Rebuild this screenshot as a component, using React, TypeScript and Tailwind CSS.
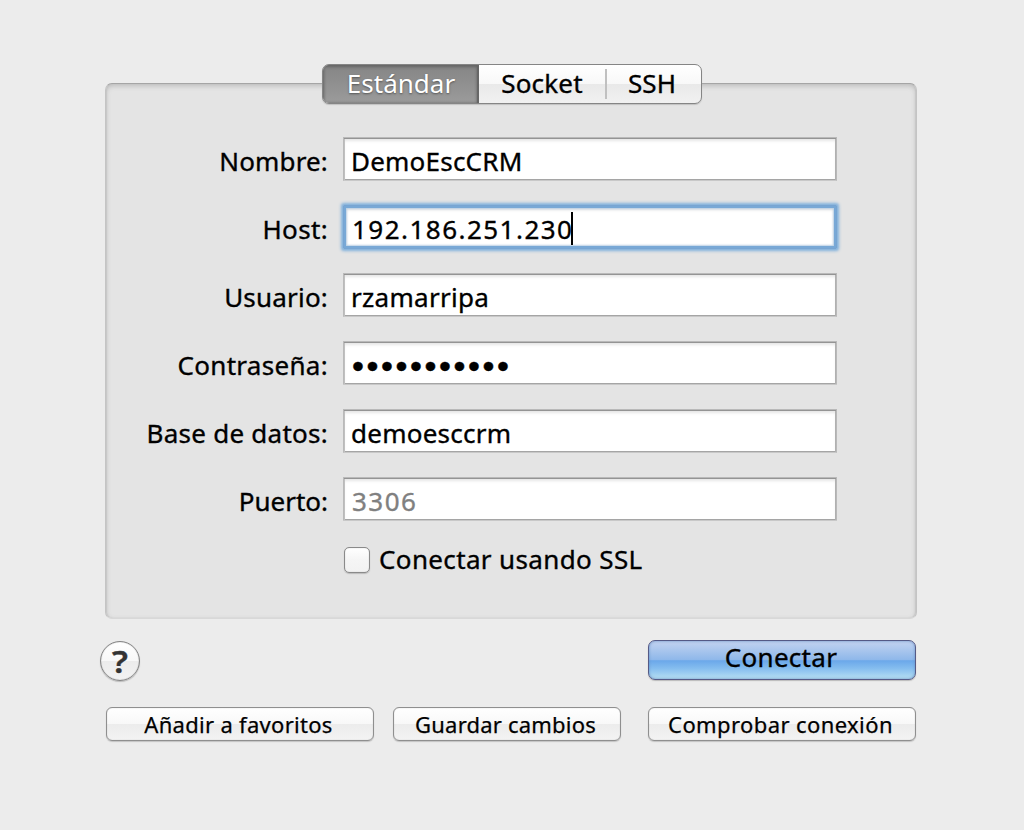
import React from "react";

type Field = {
  label: string;
  value: string;
  spacing: string;
  labelSpacing: string;
  kind?: "focused" | "password" | "placeholder";
};

const fields: Field[] = [
  { label: "Nombre:", value: "DemoEscCRM", spacing: "tracking-[0.22px]", labelSpacing: "tracking-[0.15px]" },
  { label: "Host:", value: "192.186.251.230", spacing: "tracking-[1.47px]", labelSpacing: "tracking-[0.35px]", kind: "focused" },
  { label: "Usuario:", value: "rzamarripa", spacing: "tracking-[0.3px]", labelSpacing: "tracking-[0.2px]" },
  { label: "Contraseña:", value: "•••••••••••", spacing: "tracking-[2.6px]", labelSpacing: "tracking-[0.3px]", kind: "password" },
  { label: "Base de datos:", value: "demoesccrm", spacing: "tracking-[0.25px]", labelSpacing: "tracking-[0.25px]" },
  { label: "Puerto:", value: "3306", spacing: "tracking-[1.5px]", labelSpacing: "tracking-[0px]", kind: "placeholder" },
];

function FieldRow({ label, value, spacing, labelSpacing, kind }: Field) {
  const box =
    kind === "focused"
      ? "border-[#78a5d2] shadow-[0_0_3px_2px_#7fb0dc,inset_0_0_0_2px_#78a8d6,inset_0_0_2px_3px_#b9cfe4,inset_0_2px_3px_2px_#e2e2e2]"
      : "border-[#b9b9b9] border-b-[#c8c8c8] shadow-[inset_0_1px_0_#949494,inset_1px_0_0_#c0c0c0,inset_-1px_0_0_#b0b0b0,inset_0_-1px_0_#a5a5a5,inset_0_3px_3px_#e6e6e6]";
  return (
    <div className="flex h-11 items-center">
      <div className={`w-[223px] pt-[3px] text-right leading-8 ${labelSpacing}`}>{label}</div>
      <div
        className={`ml-[15px] flex h-11 w-[494px] items-center border bg-white pt-[3px] ${kind ? "rounded-[1px] pl-[8px]" : "pl-[7px]"} ${box}`}
      >
        <span
          className={`whitespace-nowrap leading-8 ${spacing} ${kind === "placeholder" ? "text-[#808080]" : ""} ${kind === "password" ? "pt-[3px] font-['Liberation_Sans',sans-serif] text-[34px]" : ""}`}
        >
          {value}
        </span>
        {kind === "focused" && <span className="-ml-[2px] h-[33px] w-[2px] bg-black" />}
      </div>
    </div>
  );
}

function SmallButton({ width, tracking, children }: { width: string; tracking: string; children: string }) {
  return (
    <button
      className={`flex h-[34px] items-center justify-center rounded-md border border-[#8f8f8f] bg-[linear-gradient(#fff,#f8f8f8_49%,#ececec_51%,#f3f3f3)] pr-[3px] text-[22px] shadow-[0_1px_1px_#c4c4c4,inset_0_0_1px_#b0b0b0] [-webkit-text-stroke:0.25px] ${width} ${tracking}`}
    >
      {children}
    </button>
  );
}

export default function App() {
  return (
    <main className="h-[830px] w-[1024px] overflow-hidden bg-[#ececec] pt-16 font-['Noto_Sans',sans-serif] text-[26px] text-black [-webkit-text-stroke:0.35px]">
      <div className="relative z-10 ml-[322px] flex h-10 w-[380px] overflow-hidden rounded-[7px] border border-[#858585] bg-[linear-gradient(#fff,#f8f8f8_49%,#e9e9e9_51%,#f1f1f1)] shadow-[0_1px_1px_#c0c0c0] leading-9">
        <div className="w-[156px] border-r-2 border-[#676767] bg-linear-to-b from-[#858585] to-[#9b9b9b] pl-[2px] text-center text-white shadow-[inset_0_2px_3px_#666,inset_1px_0_3px_#707070] [-webkit-text-stroke:0px] [text-shadow:0_1px_2px_#555]">
          Estándar
        </div>
        <div className="flex w-[126px] justify-center tracking-[0.2px]">Socket</div>
        <div className="my-[4px] w-[2px] bg-[#c0c0c0]" />
        <div className="flex-1 pl-[21px] tracking-[0.1px]">SSH</div>
      </div>

      <section className="-mt-[21px] ml-[105px] h-[536px] w-[812px] rounded-[7px] border border-[#c4c4c4] border-t-[#a5a5a5] border-b-[#d8d8d8] bg-[#e4e4e4] pt-[53px] shadow-[inset_0_2px_5px_#bcbcbc,inset_1px_0_1px_#cfcfcf,inset_-1px_0_1px_#cfcfcf]">
        <div className="-ml-px flex flex-col gap-6">
          {fields.map((field) => (
            <FieldRow key={field.label} {...field} />
          ))}
        </div>
        <label className="mt-[24px] ml-[238px] flex h-7 items-center">
          <span className="mt-px h-[26px] w-[26px] rounded-[5px] border border-[#8a8a8a] bg-linear-to-b from-white via-[#f5f5f5] to-[#f2f2f2] shadow-[0_1px_1px_#bbb,inset_0_0_1px_#aaa]" />
          <span className="ml-[9px] leading-7 tracking-[0.36px]">Conectar usando SSL</span>
        </label>
      </section>

      <div className="mt-[21px] ml-[100px] flex w-[816px] justify-between">
        <button className="mt-px flex h-10 w-10 items-center justify-center rounded-full border border-[#858585] bg-[linear-gradient(#fff,#f8f8f8_49%,#ececec_51%,#f3f3f3)] pt-[2px] text-[30px] leading-none font-semibold text-[#333] shadow-[0_1px_1px_#bbb,inset_0_0_1px_#999]">
          <span className="inline-block scale-x-115">?</span>
        </button>
        <button className="flex h-10 w-[268px] items-center justify-center rounded-[7px] border border-[#555a86] bg-[linear-gradient(#c3d3f0,#8fb8ea_49%,#6ba8ea_52%,#85bdef_72%,#b8e0f2)] pr-[2px] pb-[5px] tracking-[0.3px] shadow-[0_1px_1px_#bbb,inset_0_0_3px_#688fc4]">
          Conectar
        </button>
      </div>

      <div className="mt-[26px] ml-[106px] flex">
        <SmallButton width="w-[268px]" tracking="tracking-[0.3px]">Añadir a favoritos</SmallButton>
        <div className="ml-[19px]">
          <SmallButton width="w-[228px]" tracking="tracking-[0.2px]">Guardar cambios</SmallButton>
        </div>
        <div className="ml-[27px]">
          <SmallButton width="w-[268px]" tracking="tracking-[0.4px]">Comprobar conexión</SmallButton>
        </div>
      </div>
    </main>
  );
}
